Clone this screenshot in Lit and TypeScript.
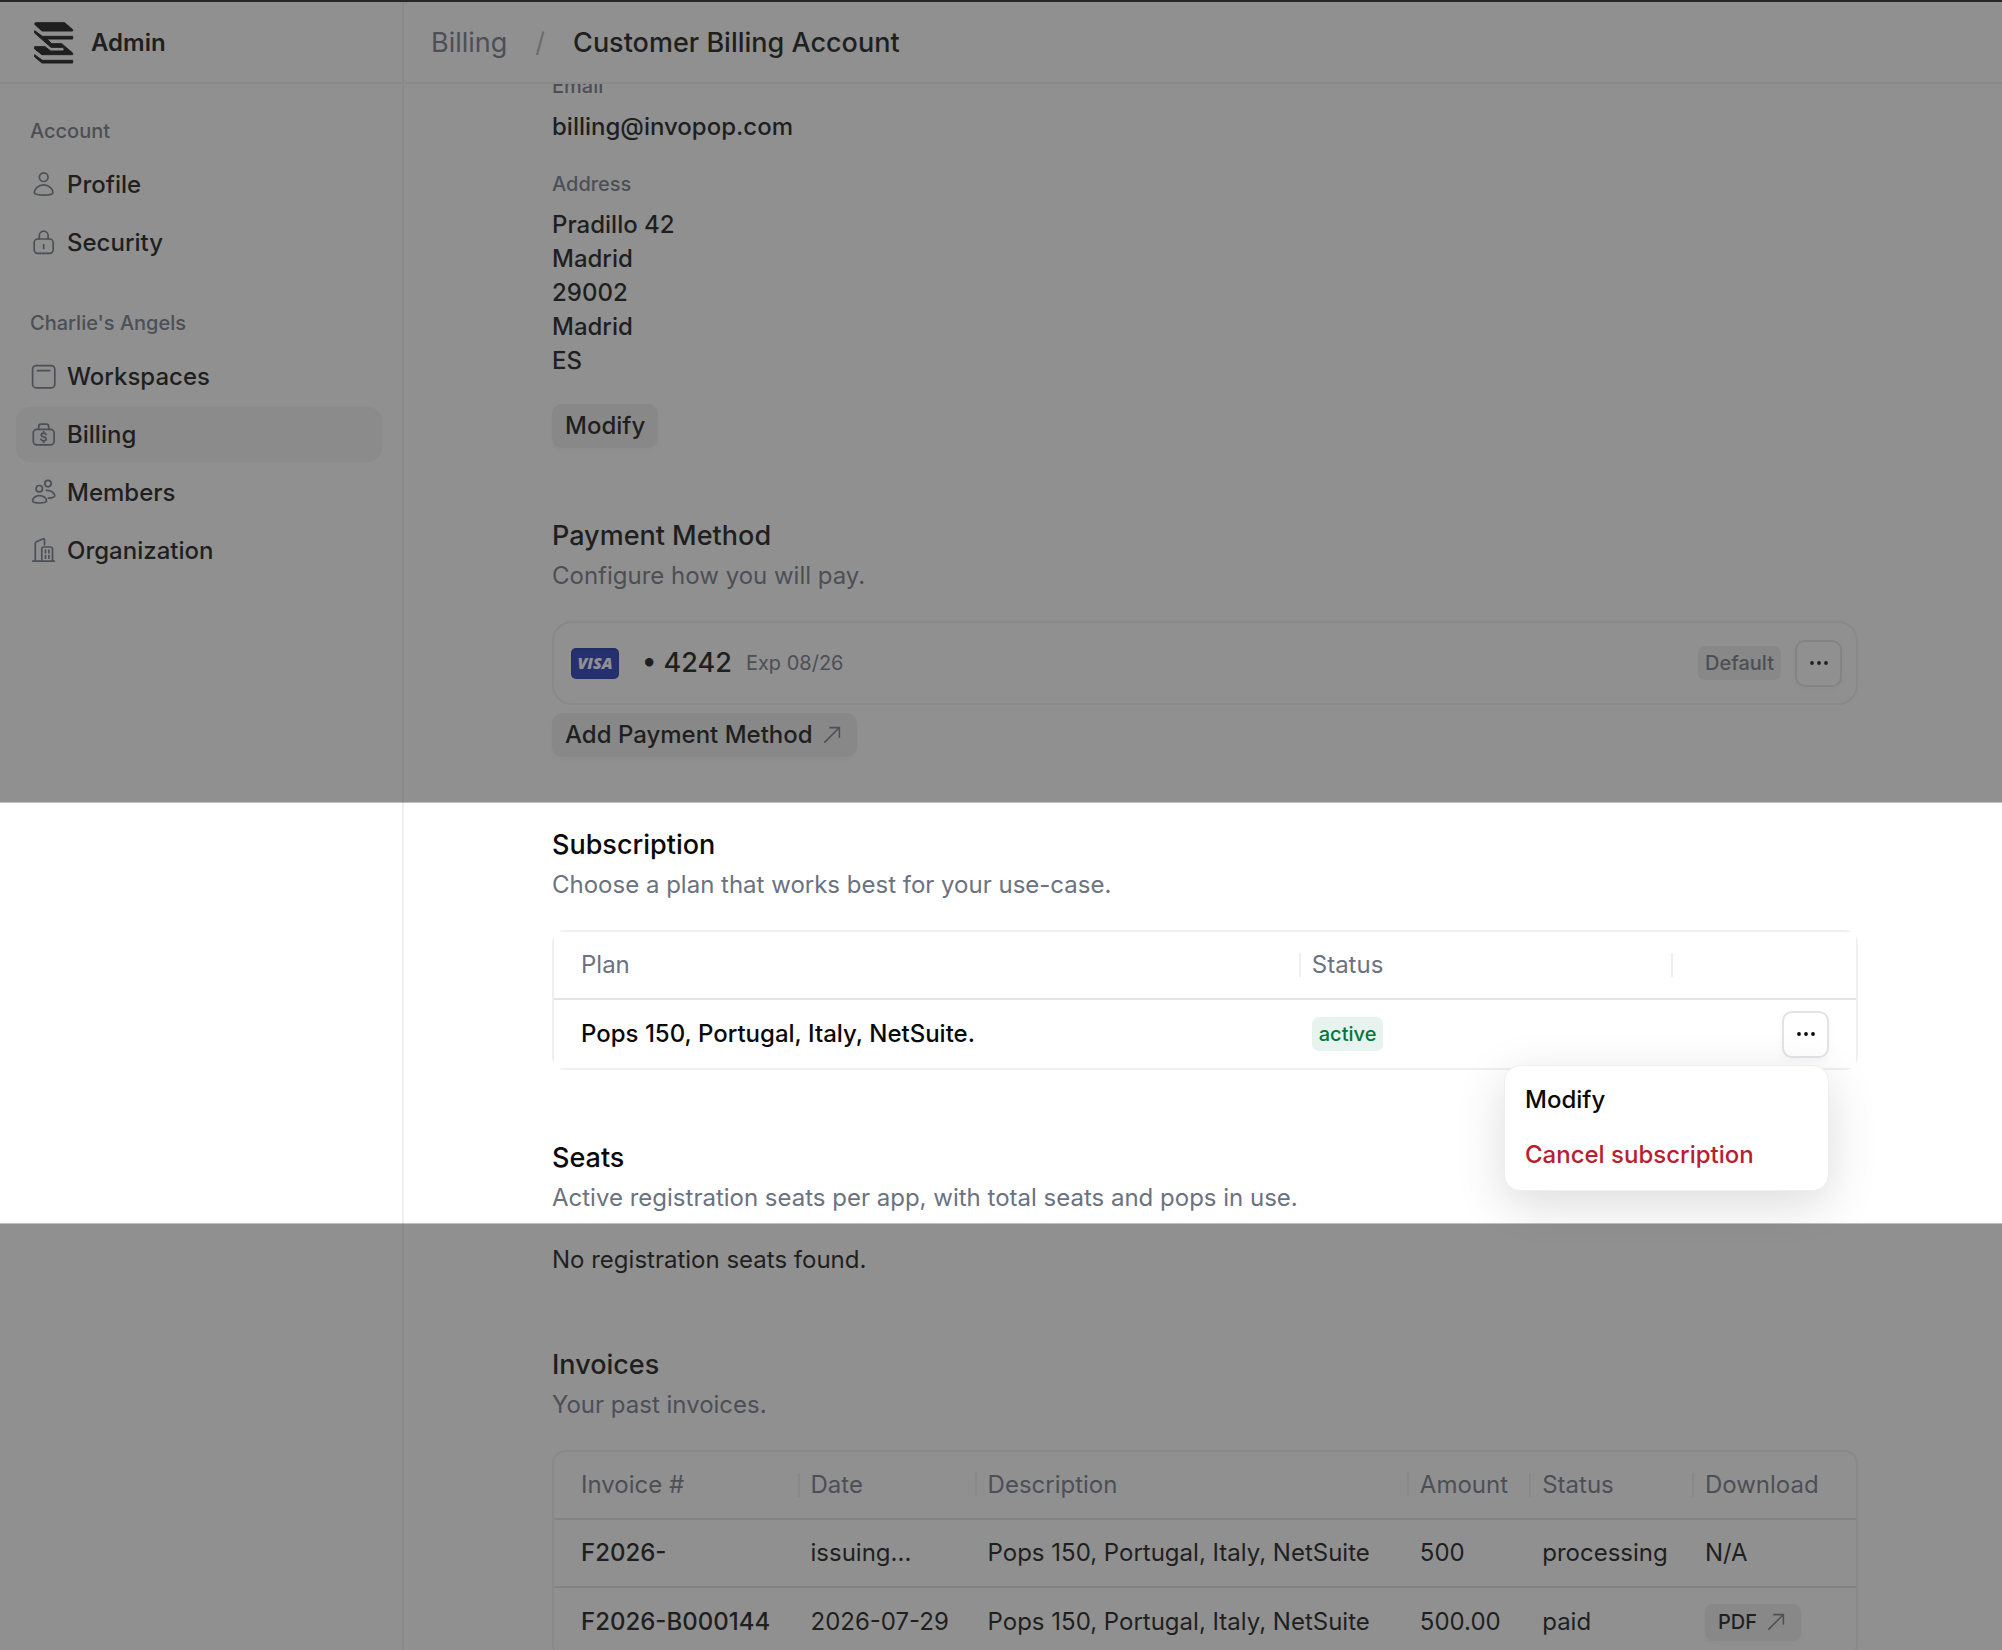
import { LitElement, html, css, svg, nothing } from "lit";
import type { TemplateResult } from "lit";
import { customElement, property, state } from "lit/decorators.js";
import { classMap } from "lit/directives/class-map.js";

interface NavItem {
  label: string;
  icon: string;
}

interface NavGroup {
  title: string;
  items: NavItem[];
}

interface Invoice {
  id: string;
  date: string;
  description: string;
  amount: string;
  status: string;
  pdf: boolean;
}

const NAV: NavGroup[] = [
  {
    title: "Account",
    items: [
      { label: "Profile", icon: "profile" },
      { label: "Security", icon: "lock" },
    ],
  },
  {
    title: "Charlie's Angels",
    items: [
      { label: "Workspaces", icon: "workspaces" },
      { label: "Billing", icon: "billing" },
      { label: "Members", icon: "members" },
      { label: "Organization", icon: "organization" },
    ],
  },
];

const ADDRESS = ["Pradillo 42", "Madrid", "29002", "Madrid", "ES"];

const INVOICES: Invoice[] = [
  {
    id: "F2026-",
    date: "issuing...",
    description: "Pops 150, Portugal, Italy, NetSuite",
    amount: "500",
    status: "processing",
    pdf: false,
  },
  {
    id: "F2026-B000144",
    date: "2026-07-29",
    description: "Pops 150, Portugal, Italy, NetSuite",
    amount: "500.00",
    status: "paid",
    pdf: true,
  },
];

const ICONS: Record<string, TemplateResult> = {
  profile: svg`
    <circle cx="13.7" cy="6.2" r="4.3" />
    <path d="M13.7 13.8C18.8 13.8 23 18 23 21.2C23 23.4 18.6 24.2 13.7 24.2S4.3 23.4 4.3 21.2C4.3 18 8.6 13.8 13.7 13.8Z" />`,
  lock: svg`
    <rect x="4.2" y="10" width="19" height="14.4" rx="3.6" />
    <path d="M9.3 10V6.6a4.4 4.4 0 0 1 8.8 0V10M13.7 15.6v3.8" />`,
  workspaces: svg`
    <rect x="2.6" y="2.6" width="22.2" height="22.2" rx="3.6" />
    <path d="M7.4 7.6h12.4" />`,
  billing: svg`
    <rect x="3.3" y="8.3" width="20.8" height="15.6" rx="3.6" />
    <path d="M8.7 8.3V5.6a2.4 2.4 0 0 1 2.4-2.4h5.2a2.4 2.4 0 0 1 2.4 2.4v2.7" />
    <path d="M16 13.6c-.3-1-1.2-1.5-2.4-1.5c-1.4 0-2.4.7-2.4 1.8c0 2.6 5 1.3 5 4c0 1.2-1.1 1.9-2.6 1.9c-1.4 0-2.4-.6-2.7-1.7M13.6 10.7v1.4M13.6 19.8v1.6" />`,
  members: svg`
    <circle cx="9.3" cy="9.7" r="3.2" />
    <circle cx="18" cy="4.6" r="3.2" />
    <path d="M9.5 16.7c3.8 0 7.1 2.5 7.1 4.9c0 1.9-3.3 2.4-7.1 2.4s-7-.5-7-2.4c0-2.4 3.2-4.9 7-4.9Z" />
    <path d="M16.4 11.4c4.6-.2 8.4 2.6 8.4 5.2c0 1.8-2.8 2.5-6.4 2.6" />`,
  organization: svg`
    <path d="M2.8 24.1h21.6M5.3 24V6.4c0-.8.4-1.4 1.1-1.7l7-2.9c.6-.2 1.1.1 1.1.8v5.1M11.8 24V12a2 2 0 0 1 2-2h6.7a2 2 0 0 1 2 2v12" />
    <path d="M15.5 13.2v2.6M18.9 13.2v2.6M15.5 18.6v2.6M18.9 18.6v2.6" />`,
};

@customElement("app-icon")
export class AppIcon extends LitElement {
  static styles = css`
    :host {
      display: flex;
      color: #6b7280;
    }
    .icon {
      width: 27px;
      height: 27px;
      fill: none;
      stroke: currentColor;
      stroke-width: 1.7;
      stroke-linecap: round;
      stroke-linejoin: round;
    }
  `;

  @property() name = "";

  render() {
    return html`<svg class="icon" viewBox="0 0 27 27" aria-hidden="true">
      ${ICONS[this.name] ?? nothing}
    </svg>`;
  }
}

const arrow = html`<svg class="arrow" viewBox="0 0 20 20" aria-hidden="true">
  <path d="M1.5 18.5L18 2M7 1.8h11.2V13" />
</svg>`;

const dots = html`<svg class="dots" viewBox="0 0 20 6" aria-hidden="true">
  <circle cx="3" cy="3" r="1.9" />
  <circle cx="10" cy="3" r="1.9" />
  <circle cx="17" cy="3" r="1.9" />
</svg>`;

const logo = html`<svg class="logo" viewBox="0 0 120 126" aria-hidden="true">
  <path d="M4 2H92L116 23V27H24L2 7Z" />
  <path
    d="M2 26L25 43H116V51H39L53 65H83L116 93V98H24L2 81V74H33L50 87H88Q93 84 88 76H51L2 33Z"
  />
  <path d="M2 98L25 115H116V123H24L2 105Z" />
</svg>`;

const visa = html`<svg class="visa" viewBox="0 0 48 31" role="img" aria-label="Visa">
  <rect class="visa-edge" width="48" height="31" rx="5" />
  <rect class="visa-face" x="1" y="2" width="46" height="28" rx="4" />
  <text class="visa-name" x="24" y="21" text-anchor="middle">VISA</text>
</svg>`;

@customElement("app-root")
export class AppRoot extends LitElement {
  static styles = css`
    :host {
      display: block;
      font-family: Inter, "Liberation Sans", sans-serif;
      font-size: 24px;
      line-height: 34px;
      color: #0a0a0a;
      --muted: #6b7280;
      --line: #efeff1;
      --rule: #e2e2e8;
      --shade: rgba(50, 50, 50, 0.54);
    }
    * {
      box-sizing: border-box;
    }
    h1,
    h2,
    p,
    dl,
    dd,
    ul {
      margin: 0;
      padding: 0;
    }
    a {
      color: inherit;
      text-decoration: none;
    }
    button {
      font: inherit;
      color: inherit;
      cursor: pointer;
    }

    .screen {
      position: relative;
      display: flex;
      height: 100vh;
      overflow: hidden;
      background: #fff;
    }

    .sidebar {
      flex: none;
      width: 404px;
      border-right: 2px solid var(--line);
    }
    .brand {
      display: flex;
      align-items: center;
      gap: 17px;
      height: 84px;
      padding: 3px 34px 0;
      border-bottom: 2px solid var(--line);
      font-weight: 600;
    }
    .logo {
      width: 40px;
      height: 42px;
      fill: #0a0a0a;
      stroke: #0a0a0a;
      stroke-width: 3;
      stroke-linejoin: round;
    }
    .groups {
      display: flex;
      flex-direction: column;
      gap: 39px;
      padding: 33px 20px 0 16px;
    }
    .group-title {
      padding: 0 14px 12px;
      font-size: 20px;
      line-height: 28px;
      font-weight: 500;
      color: var(--muted);
    }
    .nav {
      display: flex;
      flex-direction: column;
      gap: 3px;
      list-style: none;
    }
    .nav-link {
      display: flex;
      align-items: center;
      gap: 10px;
      height: 55px;
      padding: 0 14px;
      border-radius: 14px;
      font-weight: 500;
    }
    .nav-link.current {
      background: #f5f5f6;
    }

    .page {
      flex: 1;
      min-width: 0;
      display: flex;
      flex-direction: column;
    }
    .topbar {
      position: relative;
      z-index: 1;
      flex: none;
      display: flex;
      align-items: center;
      gap: 28px;
      height: 84px;
      padding: 3px 27px 0;
      border-bottom: 2px solid var(--line);
      background: #fff;
      font-size: 27px;
      line-height: 40px;
    }
    .crumb {
      color: var(--muted);
    }
    .slash {
      color: #b0b4bb;
    }
    .title {
      font: inherit;
      font-weight: 500;
    }

    .content {
      display: flex;
      flex-direction: column;
      gap: 68px;
      margin-top: -12px;
      padding: 0 144px 0 148px;
    }
    .details {
      display: flex;
      flex-direction: column;
      gap: 26px;
    }
    .field {
      display: flex;
      flex-direction: column;
      gap: 10px;
    }
    .label {
      font-size: 20px;
      line-height: 28px;
      font-weight: 500;
      color: var(--muted);
    }
    .value {
      font-weight: 500;
    }
    .account {
      display: flex;
      flex-direction: column;
      gap: 26px;
    }

    .button {
      display: flex;
      align-items: center;
      gap: 10px;
      width: fit-content;
      height: 44px;
      padding: 0 13px;
      border: 0;
      border-radius: 10px;
      background: #ededef;
      box-shadow: 0 3px 7px rgba(0, 0, 0, 0.03);
      font-weight: 500;
    }
    .button.small {
      height: 37px;
      border-radius: 8px;
      font-size: 20px;
      line-height: 28px;
    }
    .arrow {
      width: 18px;
      height: 18px;
      margin-right: 3px;
      fill: none;
      stroke: var(--muted);
      stroke-width: 1.7;
    }
    .icon-button {
      display: flex;
      align-items: center;
      justify-content: center;
      flex: none;
      width: 47px;
      height: 47px;
      padding: 0;
      border: 2px solid #e3e3e7;
      border-radius: 10px;
      background: #fff;
      box-shadow: 0 3px 7px rgba(0, 0, 0, 0.04);
    }
    .dots {
      width: 20px;
      height: 6px;
      fill: #0a0a0a;
    }

    .section-title {
      font-size: 27px;
      line-height: 40px;
      font-weight: 500;
    }
    .section-note {
      margin: 3px 0 28px;
      color: var(--muted);
    }

    .card {
      display: flex;
      align-items: center;
      gap: 14px;
      height: 84px;
      margin-bottom: 8px;
      padding: 0 14px 0 17px;
      border: 2px solid var(--line);
      border-radius: 20px;
    }
    .visa {
      width: 48px;
      height: 31px;
      margin-right: 9px;
    }
    .visa-edge {
      fill: #1226a0;
    }
    .visa-face {
      fill: #1a2fb8;
    }
    .visa-name {
      font: italic 800 16px "Open Sans", "Noto Sans", sans-serif;
      fill: #fff;
    }
    .card-number {
      font-size: 27px;
      font-weight: 500;
    }
    .card-expiry {
      flex: 1;
      font-size: 20px;
      color: var(--muted);
    }
    .badge {
      display: block;
      width: fit-content;
      padding: 3px 7px;
      border-radius: 7px;
      background: #ededef;
      color: var(--muted);
      font-size: 20px;
      line-height: 28px;
      font-weight: 500;
    }
    .badge.green {
      background: #e6f3ee;
      color: #03763d;
    }

    .frame {
      border: 2px solid var(--line);
      border-radius: 14px;
    }
    .frame.clipped {
      overflow: hidden;
    }
    .grid {
      width: 100%;
      table-layout: fixed;
      border-collapse: separate;
      border-spacing: 0;
      background: #fff;
      text-align: left;
      white-space: nowrap;
    }
    .grid th,
    .grid td {
      height: 68px;
      padding: 0 0 0 13px;
      vertical-align: middle;
      font-weight: 400;
    }
    .grid thead th {
      padding: 0;
      border-bottom: 2px solid var(--rule);
      color: var(--muted);
    }
    .grid tbody tr:not(:last-child) > * {
      border-bottom: 2px solid var(--rule);
    }
    .grid tbody th {
      padding-left: 27px;
      font-weight: 500;
    }
    .head {
      display: block;
      height: 24px;
      padding-left: 11px;
      border-left: 2px solid var(--line);
      line-height: 24px;
    }
    .grid th:first-child .head {
      padding-left: 27px;
      border-left: 0;
    }
    .plan-status {
      width: 28.6%;
    }
    .plan-actions {
      width: 14.2%;
    }
    .inv-date {
      width: 13.6%;
    }
    .inv-description {
      width: 33.2%;
    }
    .inv-amount {
      width: 9.4%;
    }
    .inv-status {
      width: 12.5%;
    }
    .inv-download {
      width: 12.6%;
    }
    .actions {
      position: relative;
      display: flex;
      justify-content: flex-end;
      padding-right: 27px;
    }
    .menu {
      position: absolute;
      z-index: 1;
      top: calc(100% + 7px);
      right: 27px;
      width: 325px;
      padding: 7px;
      border: 1px solid var(--line);
      border-radius: 16px;
      background: #fff;
      box-shadow: 0 14px 50px rgba(0, 0, 0, 0.14);
    }
    .menu-item {
      display: block;
      width: 100%;
      height: 55px;
      padding: 0 13px;
      border: 0;
      background: none;
      text-align: left;
      font-weight: 500;
    }
    .menu-item.danger {
      color: #b8202f;
    }

    .spotlight {
      position: absolute;
      inset: 0;
      z-index: 2;
      display: flex;
      flex-direction: column;
      border-top: 2px solid #262626;
      pointer-events: none;
    }
    .shade {
      height: 800px;
      background: var(--shade);
    }
    .shade.rest {
      flex: 1;
      height: auto;
    }
    .window {
      height: 422px;
      border: solid rgba(50, 50, 50, 0.3);
      border-width: 1px 0;
    }
  `;

  @state() private menuOpen = true;

  private toggleMenu() {
    this.menuOpen = !this.menuOpen;
  }

  private renderNav() {
    return NAV.map(
      (group) => html`<div>
        <p class="group-title">${group.title}</p>
        <ul class="nav">
          ${group.items.map(
            (item) => html`<li>
              <a
                href="#"
                class=${classMap({ "nav-link": true, current: item.label === "Billing" })}
              >
                <app-icon name=${item.icon}></app-icon>${item.label}
              </a>
            </li>`
          )}
        </ul>
      </div>`
    );
  }

  private renderHead(title: string, note: string) {
    return html`<h2 class="section-title">${title}</h2>
      <p class="section-note">${note}</p>`;
  }

  private renderPayment() {
    return html`<section>
      ${this.renderHead("Payment Method", "Configure how you will pay.")}
      <div class="card">
        ${visa}
        <span class="card-number">• 4242</span>
        <span class="card-expiry">Exp 08/26</span>
        <span class="badge">Default</span>
        <button class="icon-button" aria-label="Card options">${dots}</button>
      </div>
      <button class="button">Add Payment Method ${arrow}</button>
    </section>`;
  }

  private renderSubscription() {
    return html`<section>
      ${this.renderHead("Subscription", "Choose a plan that works best for your use-case.")}
      <div class="frame">
        <table class="grid">
          <colgroup>
            <col />
            <col class="plan-status" />
            <col class="plan-actions" />
          </colgroup>
          <thead>
            <tr>
              <th scope="col"><span class="head">Plan</span></th>
              <th scope="col"><span class="head">Status</span></th>
              <th scope="col" aria-label="Actions"><span class="head"></span></th>
            </tr>
          </thead>
          <tbody>
            <tr>
              <th scope="row">Pops 150, Portugal, Italy, NetSuite.</th>
              <td><span class="badge green">active</span></td>
              <td>
                <div class="actions">
                  <button
                    class="icon-button"
                    aria-label="Subscription options"
                    aria-expanded=${this.menuOpen}
                    @click=${this.toggleMenu}
                  >
                    ${dots}
                  </button>
                  ${this.menuOpen
                    ? html`<div class="menu" role="menu">
                        <button class="menu-item" role="menuitem">Modify</button>
                        <button class="menu-item danger" role="menuitem">
                          Cancel subscription
                        </button>
                      </div>`
                    : nothing}
                </div>
              </td>
            </tr>
          </tbody>
        </table>
      </div>
    </section>`;
  }

  private renderInvoices() {
    const heads = ["Invoice #", "Date", "Description", "Amount", "Status", "Download"];
    return html`<section>
      ${this.renderHead("Invoices", "Your past invoices.")}
      <div class="frame clipped">
        <table class="grid">
          <colgroup>
            <col />
            <col class="inv-date" />
            <col class="inv-description" />
            <col class="inv-amount" />
            <col class="inv-status" />
            <col class="inv-download" />
          </colgroup>
          <thead>
            <tr>
              ${heads.map((h) => html`<th scope="col"><span class="head">${h}</span></th>`)}
            </tr>
          </thead>
          <tbody>
            ${INVOICES.map(
              (row) => html`<tr>
                <th scope="row">${row.id}</th>
                <td>${row.date}</td>
                <td>${row.description}</td>
                <td>${row.amount}</td>
                <td>${row.status}</td>
                <td>
                  ${row.pdf
                    ? html`<a class="button small" href="#">PDF ${arrow}</a>`
                    : "N/A"}
                </td>
              </tr>`
            )}
          </tbody>
        </table>
      </div>
    </section>`;
  }

  render() {
    return html`<div class="screen">
      <aside class="sidebar">
        <div class="brand">${logo}<span>Admin</span></div>
        <nav class="groups">${this.renderNav()}</nav>
      </aside>
      <div class="page">
        <header class="topbar">
          <a class="crumb" href="#">Billing</a>
          <span class="slash">/</span>
          <h1 class="title">Customer Billing Account</h1>
        </header>
        <main class="content">
          <section class="account">
            <dl class="details">
              <div class="field">
                <dt class="label">Email</dt>
                <dd class="value">billing@invopop.com</dd>
              </div>
              <div class="field">
                <dt class="label">Address</dt>
                <dd class="value">${ADDRESS.map((line) => html`<div>${line}</div>`)}</dd>
              </div>
            </dl>
            <button class="button">Modify</button>
          </section>
          ${this.renderPayment()} ${this.renderSubscription()}
          <section>
            ${this.renderHead(
              "Seats",
              "Active registration seats per app, with total seats and pops in use."
            )}
            <p>No registration seats found.</p>
          </section>
          ${this.renderInvoices()}
        </main>
      </div>
      <div class="spotlight">
        <div class="shade"></div>
        <div class="window"></div>
        <div class="shade rest"></div>
      </div>
    </div>`;
  }
}
